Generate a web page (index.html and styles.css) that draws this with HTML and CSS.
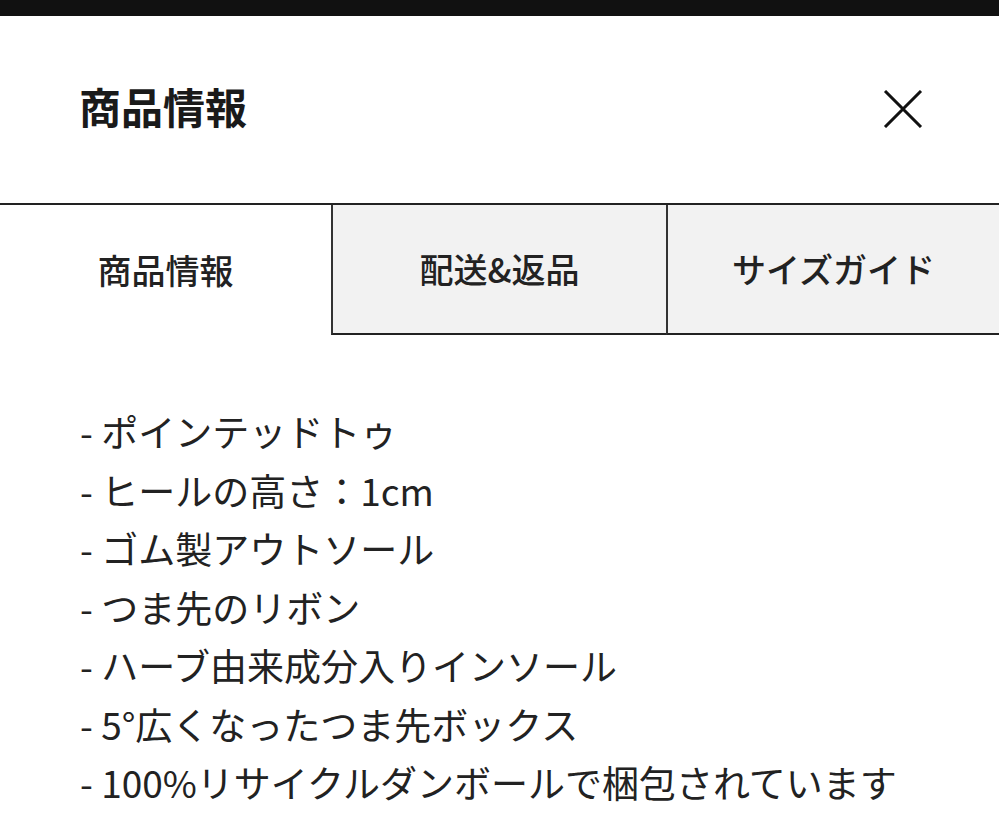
FILE: index.html
```html
<!DOCTYPE html>
<html lang="ja">
<head>
<meta charset="utf-8">
<link rel="stylesheet" href="styles.css">
</head>
<body>
<div class="topbar"></div>
<header class="header">
  <h1 class="title">商品情報</h1>
  <button class="close" aria-label="閉じる">
    <svg width="40" height="38" viewBox="0 0 40 38"><path d="M2 1 L38 37 M38 1 L2 37" stroke="#111" stroke-width="3" fill="none"/></svg>
  </button>
</header>
<nav class="tabs">
  <div class="tab active">商品情報</div>
  <div class="tab">配送&amp;返品</div>
  <div class="tab">サイズガイド</div>
</nav>
<ul class="list">
  <li>- ポインテッドトゥ</li>
  <li>- ヒールの高さ：1cm</li>
  <li>- ゴム製アウトソール</li>
  <li>- つま先のリボン</li>
  <li>- ハーブ由来成分入りインソール</li>
  <li>- 5°広くなったつま先ボックス</li>
  <li>- 100%リサイクルダンボールで梱包されています</li>
</ul>
</body>
</html>
```
FILE: styles.css
```css
html, body {
  margin: 0;
  padding: 0;
  background: #fff;
}
body {
  font-family: "Noto Sans CJK JP", "Noto Sans", sans-serif;
  color: #222;
  width: 999px;
  overflow: hidden;
}
.topbar {
  height: 16px;
  background: #111;
}
.header {
  height: 187px;
  display: flex;
  align-items: center;
  justify-content: space-between;
  padding: 0 76px 0 79px;
  box-sizing: border-box;
}
.title {
  margin: 0;
  margin-top: -8px;
  font-size: 42px;
  font-weight: 700;
  color: #1a1a1a;
}
.close {
  border: 0;
  background: none;
  padding: 0;
  margin-top: -2px;
  display: flex;
}
.tabs {
  display: grid;
  grid-template-columns: 331px 335px 1fr;
  border-top: 2px solid #222;
  height: 130px;
}
.tab {
  display: flex;
  align-items: center;
  justify-content: center;
  padding-bottom: 2px;
  font-size: 34px;
  font-weight: 500;
  color: #222;
  background: #f2f2f2;
  border-left: 2px solid #333;
  border-bottom: 2px solid #222;
}
.tab.active {
  background: #fff;
  border-left: 0;
  border-bottom: 0;
}
.list {
  list-style: none;
  margin: 0;
  padding: 67px 0 0 80px;
  font-size: 37px;
  line-height: 58.5px;
  color: #222;
}
```
